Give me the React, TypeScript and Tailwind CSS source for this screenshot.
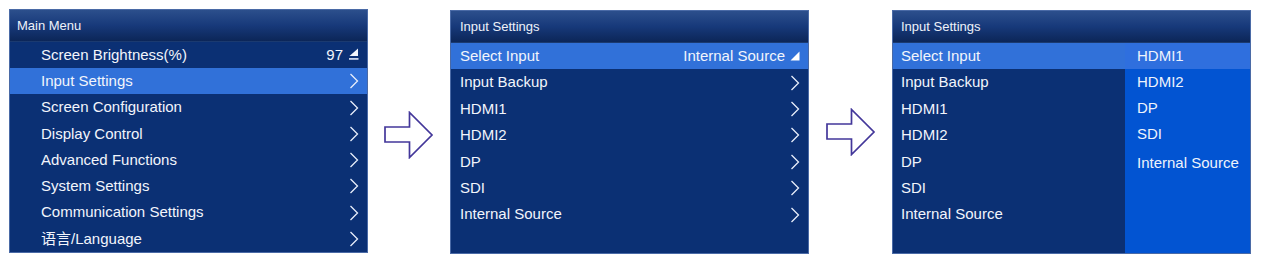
import React from 'react';

type Row = { label: string; value?: string; icon?: 'chevron' | 'edit' | 'drop' | 'none'; active?: boolean };

const mainRows: Row[] = [
  { label: 'Screen Brightness(%)', value: '97', icon: 'edit' },
  { label: 'Input Settings', icon: 'chevron', active: true },
  { label: 'Screen Configuration', icon: 'chevron' },
  { label: 'Display Control', icon: 'chevron' },
  { label: 'Advanced Functions', icon: 'chevron' },
  { label: 'System Settings', icon: 'chevron' },
  { label: 'Communication Settings', icon: 'chevron' },
  { label: '语言/Language', icon: 'chevron' },
];

const inputRows: Row[] = [
  { label: 'Select Input', value: 'Internal Source', icon: 'drop', active: true },
  { label: 'Input Backup', icon: 'chevron' },
  { label: 'HDMI1', icon: 'chevron' },
  { label: 'HDMI2', icon: 'chevron' },
  { label: 'DP', icon: 'chevron' },
  { label: 'SDI', icon: 'chevron' },
  { label: 'Internal Source', icon: 'chevron' },
];

// third panel: same list, no chevrons, options open on the right
const plainRows: Row[] = inputRows.map((r, i) => ({ label: r.label, icon: 'none', active: i === 0 }));

const sources = ['HDMI1', 'HDMI2', 'DP', 'SDI', 'Internal Source'];

const font = { fontFamily: '"Liberation Sans", Arial, "Noto Sans CJK SC", sans-serif' };

function Chevron() {
  return (
    <svg width="10" height="16" viewBox="0 0 10 16" className="shrink-0">
      <path d="M1.5 1 L8.5 8 L1.5 15" fill="none" stroke="#e8eefb" strokeWidth="1.3" />
    </svg>
  );
}

function EditMark() {
  return (
    <svg width="11" height="13" viewBox="0 0 11 13" className="shrink-0">
      <path d="M10 0.5 L1.5 8 L10 8 Z" fill="#f2f5fc" />
      <rect x="1" y="10" width="9.5" height="1.8" fill="#c9d4ea" />
    </svg>
  );
}

function DropMark() {
  return (
    <svg width="10" height="10" viewBox="0 0 10 10" className="shrink-0">
      <path d="M9.5 0.5 L9.5 9.5 L0.5 9.5 Z" fill="#ffffff" />
    </svg>
  );
}

function MenuRow({ row, padLeft }: { row: Row; padLeft: string }) {
  return (
    <div
      className={`flex h-[26.4px] items-center pr-[8px] text-[15px] text-[#f2f5fc] ${padLeft} ${
        row.active ? 'bg-[#3171d9]' : ''
      }`}
    >
      <span className="flex-1 truncate">{row.label}</span>
      {row.value && <span className="mr-[5px]">{row.value}</span>}
      {row.icon === 'chevron' && <Chevron />}
      {row.icon === 'edit' && <EditMark />}
      {row.icon === 'drop' && <DropMark />}
    </div>
  );
}

function Header({ title, padLeft }: { title: string; padLeft: string }) {
  return (
    <div
      className={`flex h-[32px] items-center border-b border-[#1b3a70] bg-gradient-to-b from-[#2c4f8c] via-[#17397a] to-[#0c2658] text-[13px] text-[#eef2fa] ${padLeft}`}
    >
      {title}
    </div>
  );
}

function Panel({ children, className }: { children: React.ReactNode; className: string }) {
  return (
    <div className={`flex h-[244px] w-[359px] shrink-0 flex-col overflow-hidden border border-[#4a6aa6] bg-[#0b3074] ${className}`}>
      {children}
    </div>
  );
}

function HollowArrow({ className }: { className: string }) {
  return (
    <svg width="50" height="48" viewBox="0 0 50 48" className={`shrink-0 ${className}`}>
      <path
        d="M1 16 L25.5 16 L25.5 1.5 L48 24 L25.5 46.5 L25.5 31 L1 31 Z"
        fill="none"
        stroke="#43379a"
        strokeWidth="1.7"
      />
    </svg>
  );
}

export default function App() {
  return (
    <div className="h-[274px] w-[1262px] overflow-hidden bg-white" style={font}>
      <div className="flex items-start">
        <Panel className="ml-[9px] mt-[9px]">
          <Header title="Main Menu" padLeft="pl-[7px]" />
          {mainRows.map((r) => (
            <MenuRow key={r.label} row={r} padLeft="pl-[31px]" />
          ))}
        </Panel>

        <HollowArrow className="ml-[16px] mt-[111px]" />

        <Panel className="ml-[16px] mt-[10px]">
          <Header title="Input Settings" padLeft="pl-[9px]" />
          {inputRows.map((r) => (
            <MenuRow key={r.label} row={r} padLeft="pl-[9px]" />
          ))}
        </Panel>

        <HollowArrow className="ml-[17px] mt-[108px]" />

        <Panel className="ml-[16px] mt-[10px]">
          <Header title="Input Settings" padLeft="pl-[8px]" />
          <div className="flex flex-1">
            <div className="flex-1">
              {plainRows.map((r) => (
                <MenuRow key={r.label} row={r} padLeft="pl-[8px]" />
              ))}
            </div>
            <div className="w-[125px] bg-[#0254d2]">
              {sources.map((s, i) => (
                <div
                  key={s}
                  className={`flex h-[26px] items-center pl-[12px] text-[15px] text-[#eef3fc] ${
                    i === 0 ? 'bg-[#2f6fde]' : ''
                  } ${i === 4 ? 'mt-[3px]' : ''}`}
                >
                  {s}
                </div>
              ))}
            </div>
          </div>
        </Panel>
      </div>
    </div>
  );
}
